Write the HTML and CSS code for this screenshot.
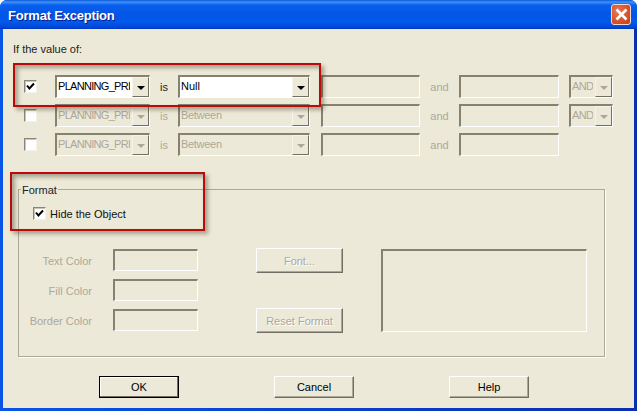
FILE: index.html
```html
<!DOCTYPE html>
<html lang="en">
<head>
<meta charset="utf-8">
<title>Format Exception</title>
<link rel="stylesheet" href="styles.css">
</head>
<body>
<div class="window">
  <header class="titlebar">
    <span class="title">Format Exception</span>
    <span class="close"><svg width="13" height="13" viewBox="0 0 13 13"><path d="M1.5 1.5L11.5 11.5M11.5 1.5L1.5 11.5" stroke="#fff" stroke-width="2.6" fill="none"/></svg></span>
  </header>
  <main class="body">
    <p class="intro">If the value of:</p>
    <div class="rows">
      <span class="check"><svg class="tick" width="9" height="9" viewBox="0 0 9 9"><path d="M1 3.5L3.4 6.5L8 1.5" stroke="#000" stroke-width="2" fill="none"/></svg></span>
      <span class="combo c1"><span class="val">PLANNING_PRI</span><span class="drop"><i class="arrow"></i></span></span>
      <span class="word">is</span>
      <span class="combo c2"><span class="val">Null</span><span class="drop"><i class="arrow"></i></span></span>
      <span class="field f1"></span>
      <span class="word off">and</span>
      <span class="field f2"></span>
      <span class="combo c3 dis"><span class="val">AND</span><span class="drop"><i class="arrow"></i></span></span>

      <span class="check"></span>
      <span class="combo c1 dis"><span class="val">PLANNING_PRI</span><span class="drop"><i class="arrow"></i></span></span>
      <span class="word off">is</span>
      <span class="combo c2 dis"><span class="val">Between</span><span class="drop"><i class="arrow"></i></span></span>
      <span class="field f1"></span>
      <span class="word off">and</span>
      <span class="field f2"></span>
      <span class="combo c3 dis"><span class="val">AND</span><span class="drop"><i class="arrow"></i></span></span>

      <span class="check"></span>
      <span class="combo c1 dis"><span class="val">PLANNING_PRI</span><span class="drop"><i class="arrow"></i></span></span>
      <span class="word off">is</span>
      <span class="combo c2 dis"><span class="val">Between</span><span class="drop"><i class="arrow"></i></span></span>
      <span class="field f1"></span>
      <span class="word off">and</span>
      <span class="field f2"></span>
    </div>
    <section class="group">
      <span class="legend">Format</span>
      <label class="hide"><span class="check"><svg class="tick" width="9" height="9" viewBox="0 0 9 9"><path d="M1 3.5L3.4 6.5L8 1.5" stroke="#000" stroke-width="2" fill="none"/></svg></span>Hide the Object</label>
      <div class="format">
        <span class="lab">Text Color</span><span class="field"></span><button class="btn dbtn" disabled>Font...</button>
        <span class="field preview"></span>
        <span class="lab">Fill Color</span><span class="field"></span><span></span>
        <span class="lab">Border Color</span><span class="field"></span><button class="btn dbtn" disabled>Reset Format</button>
      </div>
    </section>
    <div class="actions">
      <button class="btn act default">OK</button>
      <button class="btn act">Cancel</button>
      <button class="btn act">Help</button>
    </div>
  </main>
  <div class="mark m1"></div>
  <div class="mark m2"></div>
</div>
</body>
</html>
```
FILE: styles.css
```css
* { box-sizing: border-box; }
html, body { margin: 0; padding: 0; background: #fff; }
body { font: 11px/14px "Liberation Sans", Arial, sans-serif; color: #000; }
.window { position: relative; width: 637px; height: 411px; overflow: hidden; display: flex; flex-direction: column; border-radius: 7px 7px 0 0; background: linear-gradient(90deg, #0855e6, #0a2eb0); }
.titlebar {
  height: 29px; flex: none; display: flex; align-items: center; justify-content: space-between; padding: 0 6px 0 8px;
  background: linear-gradient(#0a58d8 0, #3f93f8 2px, #0a60ee 5px, #0356e6 14px, #0259ea 22px, #0048d8 27px, #0136b8 29px);
}
.title { font-weight: bold; font-size: 13px; letter-spacing: -.2px; color: #fff; text-shadow: 1px 1px 0 #0a1a8a; margin-top: 3px; }
.close { width: 20px; height: 21px; display: flex; align-items: center; justify-content: center; border: 1px solid #f3d8d0; border-radius: 3px; background: radial-gradient(circle at 35% 35%, #e87a58, #d8502a 60%, #c0401c); }
.body { flex: none; width: 631px; height: 379px; margin: 0 3px; background: #ece9d8; padding-top: 13px; }
.intro { margin: 0 0 19px 10px; height: 14px; color: #222; }
.rows { display: grid; grid-template-columns: 31px 95px 28px 143px 99px 39px 110px 44px; grid-auto-rows: 23px; row-gap: 6px; padding-left: 21px; align-items: center; }
.check { width: 13px; height: 13px; display: flex; align-items: center; justify-content: center; background: #fff; border: 1px solid; border-color: #8a877a #f4f2e8 #f4f2e8 #8a877a; box-shadow: inset 1px 1px 0 #c8c5b4; }
.combo { height: 23px; display: flex; align-items: flex-start; justify-content: space-between; background: #fff; border: solid; border-width: 2px 1px 1px 2px; border-color: #85826f #fff #fff #85826f; overflow: hidden; white-space: nowrap; }
.combo .val { padding: 2px 0 0 1px; overflow: hidden; }
.c1 .val, .c3 .val { letter-spacing: -.7px; }
.c2.dis .val { letter-spacing: -.3px; }
.drop { flex: none; width: 17px; height: 20px; display: flex; align-items: center; justify-content: center; background: #ece9d8; border: 1px solid; border-color: #f6f4ea #716f64 #716f64 #f6f4ea; }
.arrow { display: block; width: 0; height: 0; margin-top: 1px; border: 4px solid transparent; border-top: 4px solid #000; border-bottom: 0; }
.c1 { width: 95px; }
.c2 { width: 132px; }
.c3 { width: 44px; }
.dis { background: #ece9d8; color: #aca899; }
.dis .arrow { border-top-color: #aca899; }
.word { text-align: center; color: #222; }
.off { color: #aca899; }
.field { display: block; height: 23px; background: #ece9d8; border: solid; border-width: 2px 1px 1px 2px; border-color: #85826f #fff #fff #85826f; }
.f1 { width: 99px; }
.f2 { width: 100px; }
.group { position: relative; height: 168px; width: 587px; margin: 33px 0 19px 15px; border: 1px solid #aca899; box-shadow: 1px 1px 0 #fff; padding: 17px 0 0 14px; }
.legend { position: absolute; left: 2px; top: -7px; padding: 0 1px; background: #ece9d8; color: #222; }
.hide { display: flex; align-items: center; gap: 4px; height: 13px; color: #111; }
.format { display: grid; grid-template-columns: 73px 106px 145px 244px; grid-auto-rows: 22px; row-gap: 8px; margin: 29px 0 0 -14px; }
.lab { color: #aca899; text-align: right; line-height: 24px; }
.format .field { height: 22px; margin-left: 21px; width: 85px; }
.format .btn { margin: -1px 0 0 58px; }
.format .preview { grid-column: 4; grid-row: 1 / 4; width: 206px; height: 83px; margin-left: 38px; }
.btn { display: block; padding: 0; font: inherit; width: 87px; height: 25px; background: #ece9d8; border: 1px solid; border-color: #fff #716f64 #716f64 #fff; box-shadow: inset -1px -1px 0 #aca899; color: #000; }
.dbtn { color: #aca899; text-shadow: 1px 1px 0 #fff; }
.actions { display: flex; gap: 95px; padding-left: 96px; }
.act { width: 80px; height: 22px; }
.default { border: 1px solid #000; box-shadow: inset -1px -1px 0 #716f64, inset 1px 1px 0 #fff; }
.mark { position: absolute; border: 2px solid #bb0a0a; box-shadow: 3px 3px 4px rgba(60,55,30,.4), inset 3px 3px 4px rgba(60,55,30,.4); pointer-events: none; }
.m1 { left: 13px; top: 63px; width: 308px; height: 44px; }
.m2 { left: 10px; top: 172px; width: 195px; height: 59px; }
```
